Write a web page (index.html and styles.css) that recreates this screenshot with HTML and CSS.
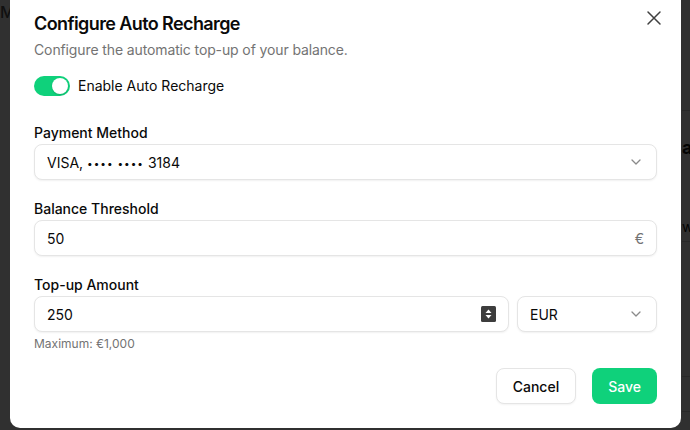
FILE: index.html
```html
<!DOCTYPE html>
<html lang="en">
<head>
    <meta charset="UTF-8">
    <meta name="viewport" content="width=device-width, initial-scale=1.0">
    <title>Configure Auto Recharge</title>
    <link rel="stylesheet" href="styles.css">
</head>
<body>

    <!-- Page behind the dialog -->
    <div class="page">
        <div class="page-head">M</div>
        <div class="page-panel">
            <div class="panel-row panel-top"></div>
            <div class="panel-row panel-mid"><b>a</b><span>w</span></div>
            <div class="panel-row panel-low"></div>
            <div class="panel-row panel-end"></div>
        </div>
    </div>

    <div class="overlay"></div>

    <!-- Dialog -->
    <div class="dialog">
        <button class="close-btn" aria-label="Close">
            <svg width="24" height="24" viewBox="0 0 24 24" fill="none" stroke="#404040" stroke-width="1.5" stroke-linecap="round">
                <path d="M18 6 6 18M6 6l12 12"/>
            </svg>
        </button>

        <h2 class="dialog-title">Configure Auto Recharge</h2>
        <p class="dialog-desc">Configure the automatic top-up of your balance.</p>

        <div class="switch-row">
            <span class="switch"><span class="switch-thumb"></span></span>
            <span class="switch-label">Enable Auto Recharge</span>
        </div>

        <div class="fields">
            <div class="field">
                <label class="field-label">Payment Method</label>
                <div class="box">
                    <span>VISA, <span class="dots">••••</span> <span class="dots">••••</span> 3184</span>
                    <svg class="chevron" width="10" height="6" viewBox="0 0 10 6" fill="none" stroke="#8a8a8a" stroke-width="1.3" stroke-linecap="round" stroke-linejoin="round">
                        <path d="M1 1l4 4 4-4"/>
                    </svg>
                </div>
            </div>

            <div class="field">
                <label class="field-label">Balance Threshold</label>
                <div class="box">
                    <span>50</span>
                    <span class="suffix">€</span>
                </div>
            </div>

            <div class="field">
                <label class="field-label">Top-up Amount</label>
                <div class="amount-row">
                    <div class="box amount">
                        <span>250</span>
                        <svg class="spinner" width="15" height="16" viewBox="0 0 15 16">
                            <rect width="15" height="16" rx="1.5" fill="#3d3d3d"/>
                            <polygon points="4.5,7 7.5,3.5 10.5,7" fill="#fff"/>
                            <polygon points="4.5,9 7.5,12.5 10.5,9" fill="#fff"/>
                        </svg>
                    </div>
                    <div class="box currency">
                        <span>EUR</span>
                        <svg class="chevron" width="10" height="6" viewBox="0 0 10 6" fill="none" stroke="#8a8a8a" stroke-width="1.3" stroke-linecap="round" stroke-linejoin="round">
                            <path d="M1 1l4 4 4-4"/>
                        </svg>
                    </div>
                </div>
                <div class="hint">Maximum: €1,000</div>
            </div>
        </div>

        <div class="dialog-footer">
            <button class="btn btn-outline">Cancel</button>
            <button class="btn btn-primary">Save</button>
        </div>
    </div>

</body>
</html>
```

FILE: styles.css
```css
body {
    margin: 0;
    font-family: Inter, "Noto Sans", sans-serif;
    background-color: #fff;
    overflow: hidden;
    height: 430px;
}
.page {
    display: flex;
    justify-content: space-between;
    height: 430px;
}
.page-head {
    font-size: 16px;
    font-weight: 500;
    padding: 2px 0 0 0;
    color: #555;
}
.page-panel {
    width: 8px;
    padding-top: 30px;
}
.panel-row {
    border-bottom: 1px solid #d6d6d6;
    font-size: 14px;
    color: #111;
}
.panel-top {
    height: 80px;
}
.panel-mid {
    height: 104px;
}
.panel-mid b {
    display: block;
    margin-top: 26px;
    font-size: 18px;
}
.panel-mid span {
    display: block;
    margin-top: 60px;
}
.panel-low {
    height: 134px;
}
.panel-end {
    height: 34px;
}
.overlay {
    position: fixed;
    top: 0;
    left: 0;
    right: 0;
    bottom: 0;
    background-color: rgba(0, 0, 0, 0.81);
}
.dialog {
    position: absolute;
    top: 0;
    left: 10px;
    width: 671px;
    box-sizing: border-box;
    padding: 10px 24px 24px;
    background-color: #fff;
    border-radius: 0 0 10px 10px;
    color: #0a0a0a;
}
.close-btn {
    position: absolute;
    top: 6px;
    right: 15px;
    padding: 0;
    border: none;
    background: none;
    width: 24px;
    height: 24px;
    cursor: pointer;
}
.close-btn svg {
    display: block;
}
.dialog-title {
    margin: 0;
    font-size: 18px;
    font-weight: 600;
    line-height: 28px;
    letter-spacing: -0.6px;
}
.dialog-desc {
    margin: 2px 0 0;
    font-size: 14px;
    line-height: 20px;
    letter-spacing: -0.12px;
    color: #737373;
}
.switch-row {
    display: flex;
    align-items: center;
    gap: 8px;
    margin-top: 16px;
    height: 20px;
}
.switch {
    display: flex;
    justify-content: flex-end;
    align-items: center;
    box-sizing: border-box;
    width: 36px;
    height: 20px;
    padding: 2px;
    border-radius: 10px;
    background-color: #0fd17b;
}
.switch-thumb {
    width: 16px;
    height: 16px;
    border-radius: 50%;
    background-color: #fff;
    box-shadow: 0 1px 2px rgba(0, 0, 0, 0.15);
}
.switch-label {
    font-size: 14px;
    line-height: 20px;
}
.fields {
    display: flex;
    flex-direction: column;
    gap: 19px;
    margin-top: 27px;
}
.field {
    display: flex;
    flex-direction: column;
    gap: 1px;
}
.field-label {
    font-size: 14px;
    font-weight: 500;
    line-height: 20px;
}
.box {
    display: flex;
    align-items: center;
    justify-content: space-between;
    box-sizing: border-box;
    height: 36px;
    padding: 0 12px;
    border: 1px solid #e5e5e5;
    border-radius: 8px;
    background-color: #fff;
    box-shadow: 0 1px 2px rgba(0, 0, 0, 0.06);
    font-size: 14px;
}
.dots {
    font-size: 10px;
    letter-spacing: 1px;
    vertical-align: 1px;
}
.chevron {
    margin-right: 3px;
}
.suffix {
    color: #737373;
}
.amount-row {
    display: flex;
    gap: 8px;
}
.amount {
    flex: 1;
}
.spinner {
    display: block;
}
.currency {
    width: 140px;
}
.hint {
    margin-top: 3px;
    font-size: 12px;
    line-height: 16px;
    color: #737373;
}
.dialog-footer {
    display: flex;
    justify-content: flex-end;
    gap: 16px;
    margin-top: 16px;
}
.btn {
    height: 36px;
    padding: 0 16px;
    border-radius: 8px;
    font-family: inherit;
    font-size: 14px;
    font-weight: 500;
    cursor: pointer;
}
.btn-outline {
    background-color: #fff;
    color: #0a0a0a;
    border: 1px solid #e5e5e5;
    box-shadow: 0 1px 2px rgba(0, 0, 0, 0.05);
}
.btn-primary {
    background-color: #0fd17b;
    color: #fff;
    border: none;
}
```
